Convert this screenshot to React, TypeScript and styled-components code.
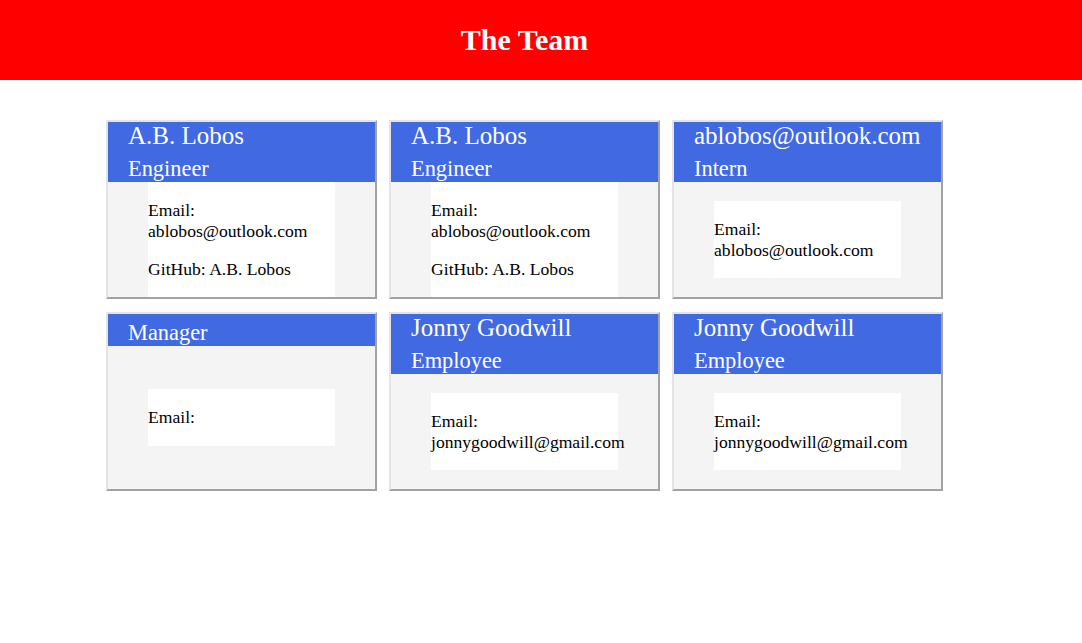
import React from 'react';
import styled, { createGlobalStyle } from 'styled-components';

const GlobalStyle = createGlobalStyle`
  html, body {
    margin: 0;
    padding: 0;
    background: #ffffff;
    font-family: "Liberation Serif", "Times New Roman", serif;
  }
`;

const Banner = styled.header`
  height: 80px;
  background-color: #ff0000;
  display: flex;
  align-items: center;
  justify-content: center;
  padding-right: 33px;
`;

const Title = styled.h1`
  margin: 0;
  font-size: 30px;
  font-weight: 700;
  color: #ffffff;
`;

const Grid = styled.main`
  display: grid;
  grid-template-columns: repeat(3, 271px);
  column-gap: 12px;
  row-gap: 13px;
  margin: 40px 0 0 106px;
`;

const Card = styled.section`
  height: 179px;
  box-sizing: border-box;
  display: flex;
  flex-direction: column;
  background-color: #f4f4f4;
  border: 2px solid;
  border-color: #e4e4e4 #a2a2a2 #a2a2a2 #e4e4e4;
  overflow: hidden;
`;

const CardHeader = styled.div`
  background-color: #4169e1;
  color: #ffffff;
  padding: 0 20px;
`;

const Name = styled.h2`
  margin: 0;
  font-size: 25px;
  font-weight: 400;
  line-height: normal;
  white-space: nowrap;
`;

const Role = styled.h3`
  margin: 6px 0 0;
  font-size: 22.4px;
  font-weight: 400;
  line-height: normal;
`;

const CardBody = styled.div`
  flex: 1;
  display: flex;
  flex-direction: column;
  justify-content: center;
  align-items: center;
`;

const InfoBox = styled.div`
  width: 70%;
  display: flow-root;
  background-color: #ffffff;
  color: #000000;
  font-size: 17.6px;
`;

const Info = styled.p`
  margin: 1em 0;
`;

type Member = {
  name: string;
  role: string;
  email: string;
  github?: string;
};

const team: Member[] = [
  { name: 'A.B. Lobos', role: 'Engineer', email: 'ablobos@outlook.com', github: 'A.B. Lobos' },
  { name: 'A.B. Lobos', role: 'Engineer', email: 'ablobos@outlook.com', github: 'A.B. Lobos' },
  { name: 'ablobos@outlook.com', role: 'Intern', email: 'ablobos@outlook.com' },
  { name: '', role: 'Manager', email: '' },
  { name: 'Jonny Goodwill', role: 'Employee', email: 'jonnygoodwill@gmail.com' },
  { name: 'Jonny Goodwill', role: 'Employee', email: 'jonnygoodwill@gmail.com' },
];

const App: React.FC = () => (
  <>
    <GlobalStyle />
    <Banner>
      <Title>The Team</Title>
    </Banner>
    <Grid>
      {team.map((m, i) => (
        <Card key={i}>
          <CardHeader>
            <Name>{m.name}</Name>
            <Role>{m.role}</Role>
          </CardHeader>
          <CardBody>
            <InfoBox>
              <Info>Email: {m.email}</Info>
              {m.github && <Info>GitHub: {m.github}</Info>}
            </InfoBox>
          </CardBody>
        </Card>
      ))}
    </Grid>
  </>
);

export default App;
